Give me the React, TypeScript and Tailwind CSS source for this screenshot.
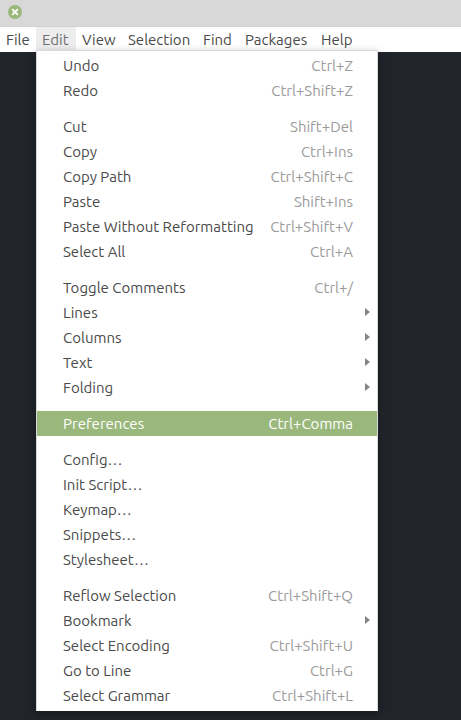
type Item = {
  label: string;
  keys?: string;
  submenu?: boolean;
  active?: boolean;
};

const groups: Item[][] = [
  [
    { label: "Undo", keys: "Ctrl+Z" },
    { label: "Redo", keys: "Ctrl+Shift+Z" },
  ],
  [
    { label: "Cut", keys: "Shift+Del" },
    { label: "Copy", keys: "Ctrl+Ins" },
    { label: "Copy Path", keys: "Ctrl+Shift+C" },
    { label: "Paste", keys: "Shift+Ins" },
    { label: "Paste Without Reformatting", keys: "Ctrl+Shift+V" },
    { label: "Select All", keys: "Ctrl+A" },
  ],
  [
    { label: "Toggle Comments", keys: "Ctrl+/" },
    { label: "Lines", submenu: true },
    { label: "Columns", submenu: true },
    { label: "Text", submenu: true },
    { label: "Folding", submenu: true },
  ],
  [{ label: "Preferences", keys: "Ctrl+Comma", active: true }],
  [
    { label: "Config…" },
    { label: "Init Script…" },
    { label: "Keymap…" },
    { label: "Snippets…" },
    { label: "Stylesheet…" },
  ],
  [
    { label: "Reflow Selection", keys: "Ctrl+Shift+Q" },
    { label: "Bookmark", submenu: true },
    { label: "Select Encoding", keys: "Ctrl+Shift+U" },
    { label: "Go to Line", keys: "Ctrl+G" },
    { label: "Select Grammar", keys: "Ctrl+Shift+L" },
  ],
];

const menus = [
  { name: "File", width: "w-9" },
  { name: "Edit", width: "w-10" },
  { name: "View", width: "w-[46px]" },
  { name: "Selection", width: "w-[75px]" },
  { name: "Find", width: "w-[42px]" },
  { name: "Packages", width: "w-[76px]" },
  { name: "Help", width: "w-11" },
];

function MenuRow({ item }: { item: Item }) {
  return (
    <div
      className={`flex h-[25px] items-center pl-[26px] pr-[7px] leading-[25px] ${
        item.active ? "bg-[#9ab87c] text-white" : "text-[#4a4a4a]"
      }`}
    >
      <span>{item.label}</span>
      <span className={`ml-auto ${item.active ? "text-white" : "text-[#9b9b9b]"}`}>{item.keys}</span>
      <span className="ml-3 flex w-[5px] shrink-0">
        {item.submenu && (
          <svg width="5" height="8" viewBox="0 0 5 8" className="-mt-0.5 fill-[#858585]">
            <path d="M0 0 5 4 0 8Z" />
          </svg>
        )}
      </span>
    </div>
  );
}

export default function App() {
  return (
    <div className="relative h-[720px] w-[461px] overflow-hidden whitespace-nowrap bg-[#21252b] font-['Ubuntu','Noto_Sans',sans-serif] text-[15px]">
      <div className="flex h-[27px] items-start border-b border-[#d2d2d2] bg-[#d8d8d8] pl-2 pt-[5px]">
        <svg width="14" height="14" viewBox="0 0 14 14">
          <circle cx="7" cy="7" r="7" fill="#9ab87c" />
          <path d="m4.2 4.2 5.6 5.6m0-5.6-5.6 5.6" stroke="#fff" strokeWidth="1.8" />
        </svg>
      </div>
      <div className="flex h-[25px] bg-white leading-[26px] text-[#4a4a4a]">
        {menus.map((m) => (
          <div key={m.name} className={`${m.width} pl-1.5 ${m.name === "Edit" ? "bg-[#ededed] text-[#707070]" : ""}`}>
            {m.name}
          </div>
        ))}
      </div>
      <div className="absolute left-9 top-[50px] flex w-[342px] flex-col gap-[11px] border border-[#d9d9d9] border-b-white bg-white pb-0.5 pt-0.5 shadow-[0_3px_8px_rgba(0,0,0,0.35)]">
        {groups.map((g) => (
          <div key={g[0].label}>
            {g.map((item) => (
              <MenuRow key={item.label} item={item} />
            ))}
          </div>
        ))}
      </div>
    </div>
  );
}
